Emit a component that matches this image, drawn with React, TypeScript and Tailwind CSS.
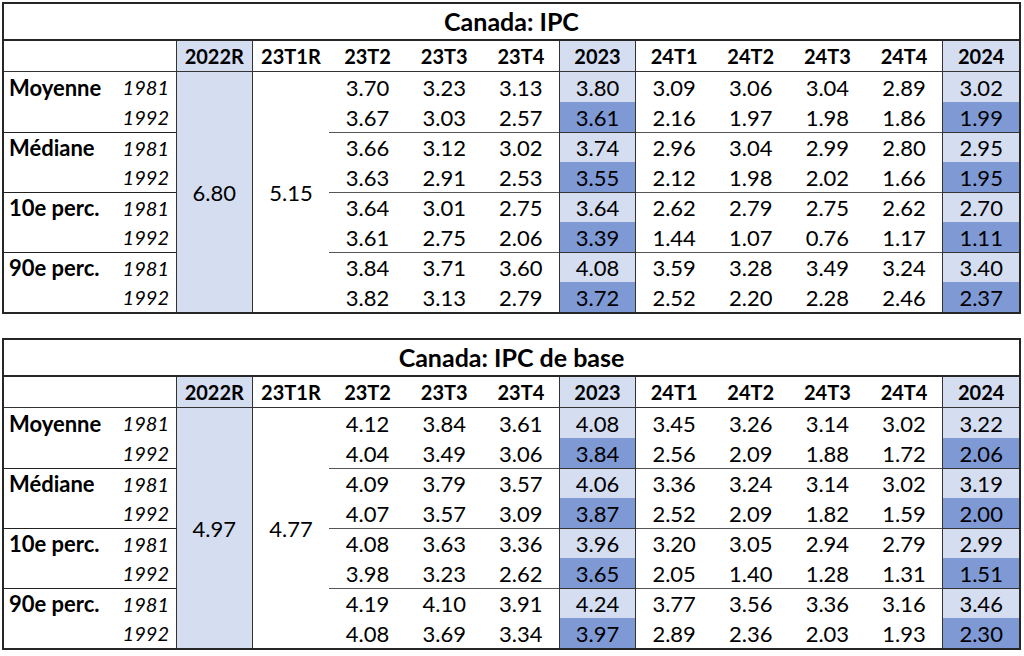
type Row = {
  name?: string;
  year: string;
  q23: string[];
  y2023: string;
  q24: string[];
  y2024: string;
};

type TableData = {
  title: string;
  r2022: string;
  r23t1: string;
  rows: Row[];
};

const IPC: TableData = {
  title: "Canada: IPC",
  r2022: "6.80",
  r23t1: "5.15",
  rows: [
    { name: "Moyenne", year: "1981", q23: ["3.70", "3.23", "3.13"], y2023: "3.80", q24: ["3.09", "3.06", "3.04", "2.89"], y2024: "3.02" },
    { year: "1992", q23: ["3.67", "3.03", "2.57"], y2023: "3.61", q24: ["2.16", "1.97", "1.98", "1.86"], y2024: "1.99" },
    { name: "Médiane", year: "1981", q23: ["3.66", "3.12", "3.02"], y2023: "3.74", q24: ["2.96", "3.04", "2.99", "2.80"], y2024: "2.95" },
    { year: "1992", q23: ["3.63", "2.91", "2.53"], y2023: "3.55", q24: ["2.12", "1.98", "2.02", "1.66"], y2024: "1.95" },
    { name: "10e perc.", year: "1981", q23: ["3.64", "3.01", "2.75"], y2023: "3.64", q24: ["2.62", "2.79", "2.75", "2.62"], y2024: "2.70" },
    { year: "1992", q23: ["3.61", "2.75", "2.06"], y2023: "3.39", q24: ["1.44", "1.07", "0.76", "1.17"], y2024: "1.11" },
    { name: "90e perc.", year: "1981", q23: ["3.84", "3.71", "3.60"], y2023: "4.08", q24: ["3.59", "3.28", "3.49", "3.24"], y2024: "3.40" },
    { year: "1992", q23: ["3.82", "3.13", "2.79"], y2023: "3.72", q24: ["2.52", "2.20", "2.28", "2.46"], y2024: "2.37" },
  ],
};

const IPC_BASE: TableData = {
  title: "Canada: IPC de base",
  r2022: "4.97",
  r23t1: "4.77",
  rows: [
    { name: "Moyenne", year: "1981", q23: ["4.12", "3.84", "3.61"], y2023: "4.08", q24: ["3.45", "3.26", "3.14", "3.02"], y2024: "3.22" },
    { year: "1992", q23: ["4.04", "3.49", "3.06"], y2023: "3.84", q24: ["2.56", "2.09", "1.88", "1.72"], y2024: "2.06" },
    { name: "Médiane", year: "1981", q23: ["4.09", "3.79", "3.57"], y2023: "4.06", q24: ["3.36", "3.24", "3.14", "3.02"], y2024: "3.19" },
    { year: "1992", q23: ["4.07", "3.57", "3.09"], y2023: "3.87", q24: ["2.52", "2.09", "1.82", "1.59"], y2024: "2.00" },
    { name: "10e perc.", year: "1981", q23: ["4.08", "3.63", "3.36"], y2023: "3.96", q24: ["3.20", "3.05", "2.94", "2.79"], y2024: "2.99" },
    { year: "1992", q23: ["3.98", "3.23", "2.62"], y2023: "3.65", q24: ["2.05", "1.40", "1.28", "1.31"], y2024: "1.51" },
    { name: "90e perc.", year: "1981", q23: ["4.19", "4.10", "3.91"], y2023: "4.24", q24: ["3.77", "3.56", "3.36", "3.16"], y2024: "3.46" },
    { year: "1992", q23: ["4.08", "3.69", "3.34"], y2023: "3.97", q24: ["2.89", "2.36", "2.03", "1.93"], y2024: "2.30" },
  ],
};

const LIGHT = "bg-[#d5ddf0]";
const DARK = "bg-[#7f99d5]";

function Cell({ value, className = "" }: { value: string; className?: string }) {
  return <div className={`flex items-center justify-center text-[22px] ${className}`}>{value}</div>;
}

function StatTable({ data }: { data: TableData }) {
  return (
    <div className="w-[1019px] border-2 border-[#262626] bg-white text-black">
      <div className="flex h-[37px] items-center justify-center border-b-2 border-[#262626] text-[25px] font-bold">
        {data.title}
      </div>
      <div className="grid grid-cols-[172px_repeat(11,minmax(0,1fr))] grid-rows-[31px_repeat(8,30px)]">
        {/* header */}
        <div className="border-b border-[#333]" />
        <div className={`flex items-center justify-center border-x border-b border-[#333] text-[20px] font-bold ${LIGHT}`}>2022R</div>
        <div className="flex items-center justify-center border-b border-[#333] text-[20px] font-bold">23T1R</div>
        {["23T2", "23T3", "23T4"].map(h => (
          <div key={h} className="flex items-center justify-center border-b border-[#333] text-[20px] font-bold">{h}</div>
        ))}
        <div className={`flex items-center justify-center border-x border-b border-[#333] text-[20px] font-bold ${LIGHT}`}>2023</div>
        {["24T1", "24T2", "24T3", "24T4"].map(h => (
          <div key={h} className="flex items-center justify-center border-b border-[#333] text-[20px] font-bold">{h}</div>
        ))}
        <div className={`flex items-center justify-center border-l border-b border-[#333] text-[20px] font-bold ${LIGHT}`}>2024</div>

        {/* body */}
        {data.rows.map((r, i) => {
          const sep = i % 2 === 0 && i > 0;
          const line = sep ? "border-t border-[#555]" : "";
          const shade = i % 2 === 0 ? LIGHT : DARK;
          return [
            <div key={`l${i}`} className={`flex items-center justify-between pl-[5px] pr-[7px] ${sep ? "border-t border-[#222]" : ""}`}>
              <span className="text-[22px] font-bold">{r.name ?? ""}</span>
              <span className="text-[20px] italic">{r.year}</span>
            </div>,
            i === 0 && (
              <div key="r22" className={`row-span-8 flex items-center justify-center border-x border-[#333] text-[22px] ${LIGHT}`}>
                {data.r2022}
              </div>
            ),
            i === 0 && (
              <div key="r23" className="row-span-8 flex items-center justify-center text-[22px]">
                {data.r23t1}
              </div>
            ),
            ...r.q23.map((v, j) => <Cell key={`a${i}${j}`} value={v} className={line} />),
            <Cell key={`y3${i}`} value={r.y2023} className={`border-x border-[#333] ${shade} ${sep ? "border-t" : ""}`} />,
            ...r.q24.map((v, j) => <Cell key={`b${i}${j}`} value={v} className={line} />),
            <Cell key={`y4${i}`} value={r.y2024} className={`border-l border-[#333] ${shade} ${sep ? "border-t" : ""}`} />,
          ];
        })}
      </div>
    </div>
  );
}

export default function App() {
  return (
    <div className="min-h-[656px] w-[1024px] bg-white pl-[2px] pt-[2px] font-['Lato',sans-serif]">
      <StatTable data={IPC} />
      <div className="h-[24px]" />
      <StatTable data={IPC_BASE} />
    </div>
  );
}
